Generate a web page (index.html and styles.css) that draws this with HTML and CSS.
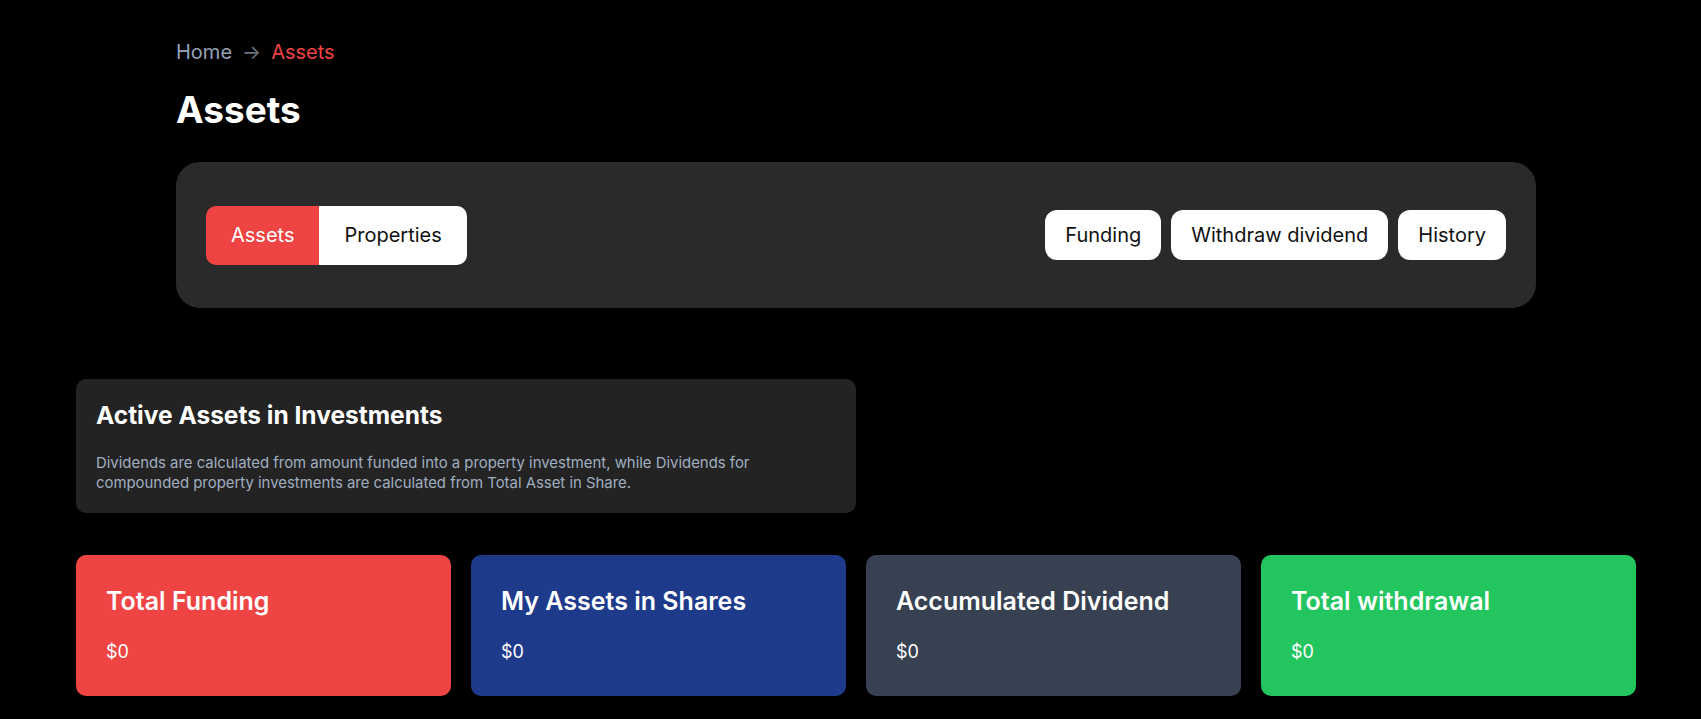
FILE: index.html
```html
<!DOCTYPE html>
<html lang="en">
<head>
  <meta charset="UTF-8" />
  <title>Assets</title>
  <meta name="viewport" content="width=device-width, initial-scale=1" />
  <link rel="stylesheet" href="styles.css">
</head>
<body>
  <div class="page">
    <header class="page-head">
      <nav class="breadcrumb" aria-label="Breadcrumb">
        <a href="#">Home</a>
        <span class="crumb-sep">→</span>
        <span class="crumb-current">Assets</span>
      </nav>
      <h1>Assets</h1>

      <div class="toolbar">
        <div class="tabs" role="tablist">
          <button class="tab active" role="tab" aria-selected="true">Assets</button>
          <button class="tab" role="tab">Properties</button>
        </div>
        <div class="actions">
          <button class="action-btn">Funding</button>
          <button class="action-btn">Withdraw dividend</button>
          <button class="action-btn">History</button>
        </div>
      </div>
    </header>

    <section class="info-card">
      <h2>Active Assets in Investments</h2>
      <p>Dividends are calculated from amount funded into a property investment, while Dividends for compounded property investments are calculated from Total Asset in Share.</p>
    </section>

    <section class="stats">
      <div class="stat-card red">
        <h3>Total Funding</h3>
        <p>$0</p>
      </div>
      <div class="stat-card blue">
        <h3>My Assets in Shares</h3>
        <p>$0</p>
      </div>
      <div class="stat-card slate">
        <h3>Accumulated Dividend</h3>
        <p>$0</p>
      </div>
      <div class="stat-card green">
        <h3>Total withdrawal</h3>
        <p>$0</p>
      </div>
    </section>
  </div>
</body>
</html>
```

FILE: styles.css
```css
body {
  margin: 0;
  background: #000;
  color: #fff;
  font-family: Inter, 'Noto Sans', sans-serif;
}
.page {
  width: 1560px;
  padding: 38px 0 40px 76px;
}
.page-head {
  padding: 0 100px;
}
.breadcrumb {
  font-size: 20px;
  line-height: 28px;
  display: flex;
  gap: 10px;
}
.breadcrumb a {
  color: #94a3b8;
  text-decoration: none;
}
.crumb-sep {
  color: #6b7280;
}
.crumb-current {
  color: #ef4444;
}
h1 {
  margin: 24px 0 32px;
  font-size: 37px;
  line-height: 40px;
  font-weight: 700;
}
.toolbar {
  background: #2a2a2a;
  border-radius: 24px;
  height: 146px;
  padding: 0 30px;
  display: flex;
  justify-content: space-between;
  align-items: center;
  box-sizing: border-box;
}
.tabs {
  display: flex;
  border-radius: 10px;
  overflow: hidden;
}
.tab {
  font-family: inherit;
  font-size: 20px;
  height: 59px;
  padding: 0 25px;
  border: none;
  background: #fff;
  color: #111;
  cursor: pointer;
}
.tab.active {
  background: #ef4444;
  color: #fff;
}
.actions {
  display: flex;
  gap: 10px;
}
.action-btn {
  font-family: inherit;
  font-size: 20px;
  height: 50px;
  padding: 0 20px;
  border: none;
  border-radius: 12px;
  background: #fff;
  color: #111;
  cursor: pointer;
}
.info-card {
  margin-top: 71px;
  width: 780px;
  background: #232323;
  border-radius: 10px;
  padding: 20px;
  box-sizing: border-box;
}
.info-card h2 {
  margin: 0 0 22px;
  font-size: 24.5px;
  line-height: 32px;
  font-weight: 700;
}
.info-card p {
  margin: 0;
  max-width: 730px;
  font-size: 14.9px;
  line-height: 20px;
  color: #a0aec0;
}
.stats {
  margin-top: 42px;
  display: grid;
  grid-template-columns: repeat(4, 1fr);
  gap: 20px;
}
.stat-card {
  border-radius: 10px;
  padding: 30px;
}
.stat-card h3 {
  margin: 0 0 21px;
  font-size: 25px;
  line-height: 32px;
  font-weight: 600;
}
.stat-card p {
  margin: 0;
  font-size: 18px;
  line-height: 28px;
}
.stat-card.red { background: #ef4444; }
.stat-card.blue { background: #1e3a8a; }
.stat-card.slate { background: #374151; }
.stat-card.green { background: #22c55e; }
```
